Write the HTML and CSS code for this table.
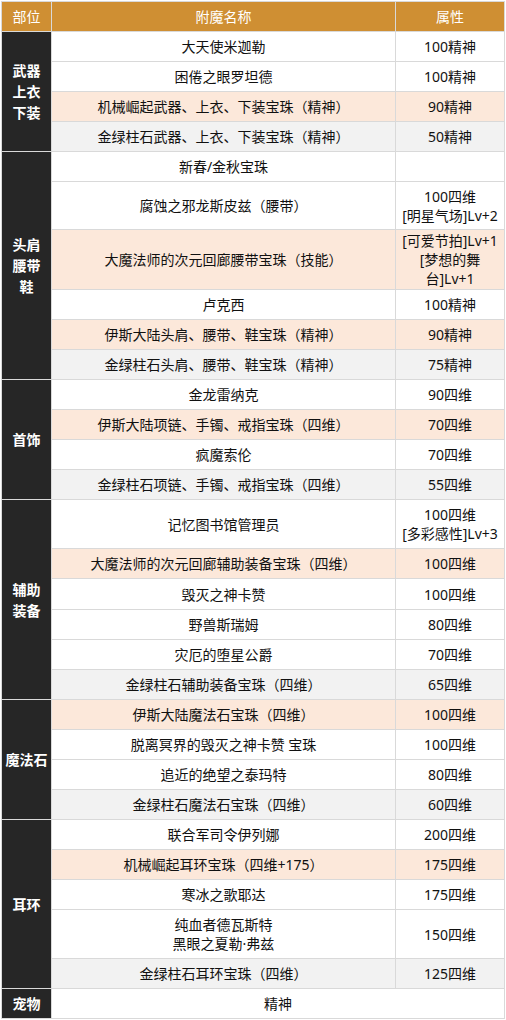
FILE: index.html
```html
<!DOCTYPE html>
<html lang="zh-CN">
<head>
<meta charset="utf-8">
<title>附魔表</title>
<link rel="stylesheet" href="styles.css">
</head>
<body>
<div class="sheet">
  <div class="hd">部位</div><div class="hd">附魔名称</div><div class="hd">属性</div>

  <div class="part span4">武器<br>上衣<br>下装</div>
  <div class="c w">大天使米迦勒</div><div class="c w">100精神</div>
  <div class="c w">困倦之眼罗坦德</div><div class="c w">100精神</div>
  <div class="c p">机械崛起武器、上衣、下装宝珠（精神）</div><div class="c p">90精神</div>
  <div class="c g">金绿柱石武器、上衣、下装宝珠（精神）</div><div class="c g">50精神</div>

  <div class="part span6">头肩<br>腰带<br>鞋</div>
  <div class="c w">新春/金秋宝珠</div><div class="c w"></div>
  <div class="c w">腐蚀之邪龙斯皮兹（腰带）</div><div class="c w">100四维<br>[明星气场]Lv+2</div>
  <div class="c p">大魔法师的次元回廊腰带宝珠（技能）</div><div class="c p">[可爱节拍]Lv+1<br>[梦想的舞<br>台]Lv+1</div>
  <div class="c w">卢克西</div><div class="c w">100精神</div>
  <div class="c p">伊斯大陆头肩、腰带、鞋宝珠（精神）</div><div class="c p">90精神</div>
  <div class="c g">金绿柱石头肩、腰带、鞋宝珠（精神）</div><div class="c g">75精神</div>

  <div class="part span4">首饰</div>
  <div class="c w">金龙雷纳克</div><div class="c w">90四维</div>
  <div class="c p">伊斯大陆项链、手镯、戒指宝珠（四维）</div><div class="c p">70四维</div>
  <div class="c w">疯魔索伦</div><div class="c w">70四维</div>
  <div class="c g">金绿柱石项链、手镯、戒指宝珠（四维）</div><div class="c g">55四维</div>

  <div class="part span6">辅助<br>装备</div>
  <div class="c w">记忆图书馆管理员</div><div class="c w">100四维<br>[多彩感性]Lv+3</div>
  <div class="c p">大魔法师的次元回廊辅助装备宝珠（四维）</div><div class="c p">100四维</div>
  <div class="c w">毁灭之神卡赞</div><div class="c w">100四维</div>
  <div class="c w">野兽斯瑞姆</div><div class="c w">80四维</div>
  <div class="c w">灾厄的堕星公爵</div><div class="c w">70四维</div>
  <div class="c g">金绿柱石辅助装备宝珠（四维）</div><div class="c g">65四维</div>

  <div class="part span4">魔法石</div>
  <div class="c p">伊斯大陆魔法石宝珠（四维）</div><div class="c p">100四维</div>
  <div class="c w">脱离冥界的毁灭之神卡赞 宝珠</div><div class="c w">100四维</div>
  <div class="c w">追近的绝望之泰玛特</div><div class="c w">80四维</div>
  <div class="c g">金绿柱石魔法石宝珠（四维）</div><div class="c g">60四维</div>

  <div class="part span5">耳环</div>
  <div class="c w">联合军司令伊列娜</div><div class="c w">200四维</div>
  <div class="c p">机械崛起耳环宝珠（四维+175）</div><div class="c p">175四维</div>
  <div class="c w">寒冰之歌耶达</div><div class="c w">175四维</div>
  <div class="c w">纯血者德瓦斯特<br>黑眼之夏勒·弗兹</div><div class="c w">150四维</div>
  <div class="c g">金绿柱石耳环宝珠（四维）</div><div class="c g">125四维</div>

  <div class="part">宠物</div>
  <div class="c w wide">精神</div>
</div>
</body>
</html>
```
FILE: styles.css
```css
html, body {
  margin: 0;
  padding: 0;
  background: #ffffff;
}
body {
  font-family: "Noto Sans", "Noto Sans CJK SC", "Microsoft YaHei", sans-serif;
  font-size: 14px;
  color: #111111;
}
.sheet {
  display: grid;
  width: fit-content;
  margin: 1px 0 0 1px;
  padding: 1px;
  gap: 1px;
  background: #d9d9d9;
  grid-template-columns: 49px 343px 108px;
  grid-template-rows:
    29px
    29px 29px 29px 29px
    29px 47px 59px 29px 29px 29px
    29px 29px 29px 29px
    48px 29px 30px 29px 29px 29px
    29px 29px 29px 29px
    29px 29px 29px 48px 29px
    29px;
}
.hd {
  background: #cf8f33;
  color: #ffffff;
  display: flex;
  align-items: center;
  justify-content: center;
  line-height: 19px;
}
.part {
  background: #262626;
  color: #ffffff;
  font-weight: bold;
  display: flex;
  align-items: center;
  justify-content: center;
  text-align: center;
  line-height: 21px;
}
.span4 { grid-row: span 4; }
.span5 { grid-row: span 5; }
.span6 { grid-row: span 6; }
.c {
  display: flex;
  align-items: center;
  justify-content: center;
  text-align: center;
  line-height: 19px;
}
.w { background: #ffffff; }
.p { background: #fce8da; }
.g { background: #f2f2f2; }
.wide { grid-column: span 2; }
```
